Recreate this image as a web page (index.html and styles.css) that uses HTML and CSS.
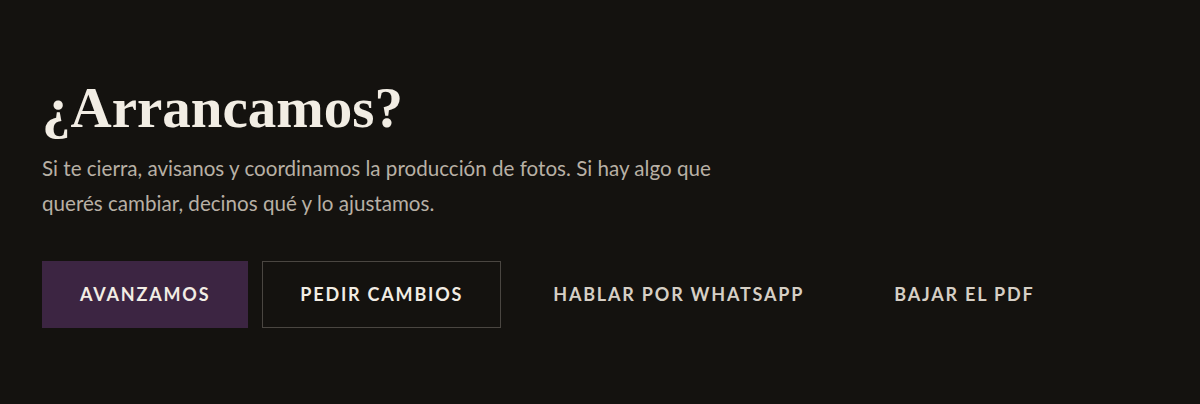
FILE: index.html
```html
<!DOCTYPE html>
<html lang="es">
<head>
  <meta charset="UTF-8">
  <meta name="viewport" content="width=device-width, initial-scale=1.0">
  <title>¿Arrancamos?</title>
  <link rel="stylesheet" href="styles.css">
</head>
<body>
  <section class="cta">
    <h1>¿Arrancamos?</h1>
    <p class="cta-text">Si te cierra, avisanos y coordinamos la producción de fotos. Si hay algo que querés cambiar, decinos qué y lo ajustamos.</p>
    <div class="cta-actions">
      <a href="#" class="btn btn-primary">Avanzamos</a>
      <a href="#" class="btn btn-outline">Pedir cambios</a>
      <a href="#" class="btn btn-link">Hablar por WhatsApp</a>
      <a href="#" class="btn btn-link">Bajar el PDF</a>
    </div>
  </section>
</body>
</html>
```

FILE: styles.css
```css
body {
  margin: 0;
  background-color: #14120f;
  font-family: Lato, "Open Sans", sans-serif;
  color: #b8b0a5;
}

.cta {
  padding: 77px 42px 40px;
}

h1 {
  margin: 0;
  font-family: "Liberation Serif", "DejaVu Serif", serif;
  font-weight: bold;
  font-size: 57px;
  line-height: 1.1;
  color: #f2ede4;
}

.cta-text {
  max-width: 720px;
  margin: 11px 0 0;
  font-size: 20.6px;
  line-height: 35px;
}

.cta-actions {
  display: flex;
  gap: 14px;
  margin-top: 40px;
}

.btn {
  display: inline-flex;
  align-items: center;
  padding: 0 37px;
  height: 67px;
  box-sizing: border-box;
  border: 1px solid transparent;
  font-size: 18px;
  font-weight: bold;
  letter-spacing: 0.1em;
  text-transform: uppercase;
  text-decoration: none;
  color: #f2ede4;
}

.btn-primary {
  background-color: #3c2542;
}

.btn-outline {
  border-color: #4a4641;
}

.btn-link {
  color: #d6cfc5;
}
```
